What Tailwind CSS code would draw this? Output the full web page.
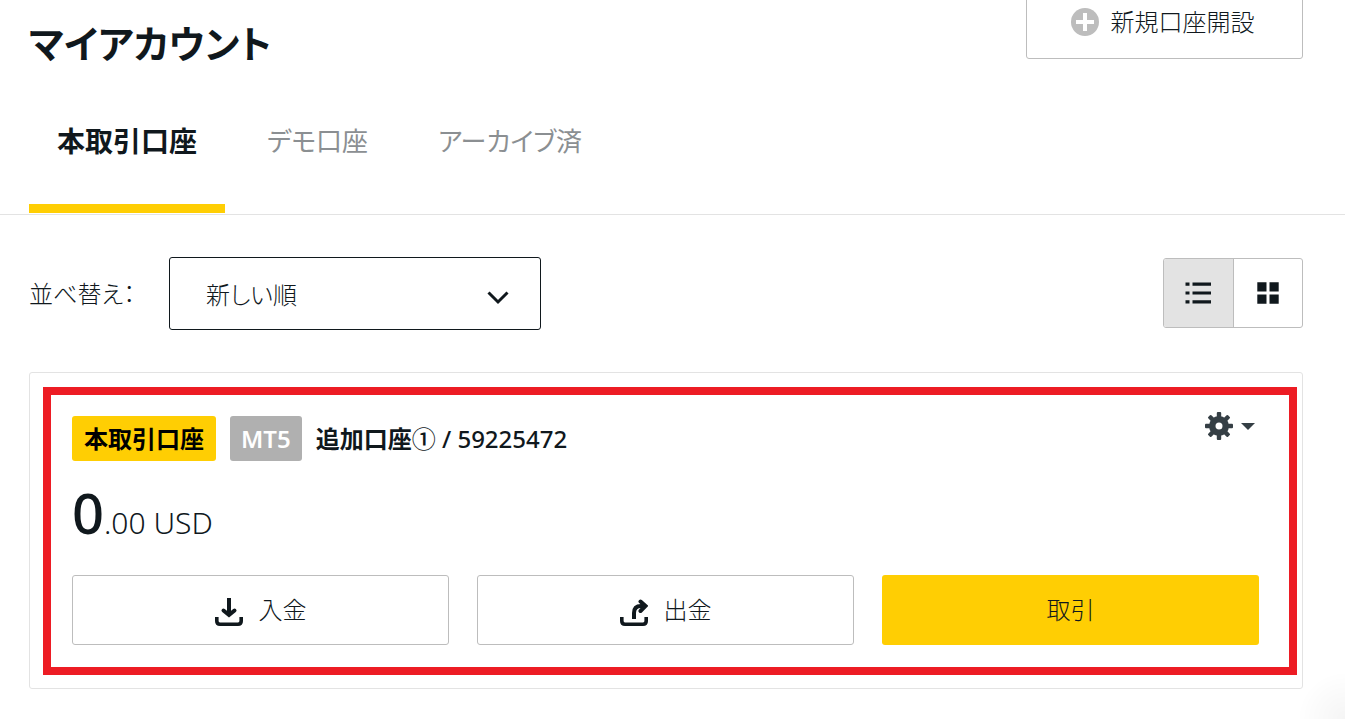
<!DOCTYPE html>
<html lang="ja">
<head>
<meta charset="utf-8">
<meta name="viewport" content="width=device-width, initial-scale=1">
<title>マイアカウント</title>
<script src="https://cdn.jsdelivr.net/npm/@tailwindcss/browser@4"></script>
</head>
<body class="bg-white font-['Noto_Sans','Noto_Sans_CJK_JP',sans-serif] text-2xl text-[#10181d] [font-feature-settings:'palt']">
<header class="flex items-start justify-between pr-[42px] pl-[29px]">
  <h1 class="mt-[19px] text-[38px] leading-[48px] font-bold">マイアカウント</h1>
  <button type="button" class="-mt-4 flex h-[75px] w-[277px] items-center justify-center gap-3 rounded-[3px] border border-[#bdbdbd] pr-1 font-light">
    <svg class="size-7" viewBox="0 0 28 28" aria-hidden="true"><circle cx="14" cy="14" r="14" fill="#bdbdbd"/><path d="M14 5v18M5 14h18" stroke="#fff" stroke-width="4"/></svg>
    <span class="leading-9">新規口座開設</span>
  </button>
</header>

<nav class="flex gap-[14px] border-b border-[#e3e3e3] pb-px pl-[29px] text-[26px] leading-10">
  <a href="#real" aria-current="page" class="border-b-[9px] border-[#ffce03] px-7 pt-[54px] pb-[43px] text-[28px] font-bold">本取引口座</a>
  <a href="#demo" class="px-7 pt-[54px] text-[#8b8f92]">デモ口座</a>
  <a href="#archive" class="px-7 pt-[54px] text-[#8b8f92]">アーカイブ済</a>
</nav>

<main class="pr-[42px] pl-[29px]">
  <div class="flex items-center pt-[42px]">
    <label for="sort" class="w-[140px] font-light">並べ替え：</label>
    <div class="relative w-[372px]">
      <select id="sort" class="h-[73px] w-full appearance-none rounded-[3px] border border-[#10181d] bg-white px-9 pt-0.5 font-light">
        <option>新しい順</option>
      </select>
      <svg class="pointer-events-none absolute top-[34px] right-8 h-[14px] w-[22px]" viewBox="0 0 22 14" fill="none" stroke="#10181d" stroke-width="3" aria-hidden="true"><path d="M1.500 1.500 11 11 20.500 1.500"/></svg>
    </div>
    <div class="mb-0.5 ml-auto flex h-[70px] w-[140px] overflow-hidden rounded-[3px] border border-[#bdbdbd]">
      <button type="button" aria-label="リスト表示" aria-pressed="true" class="flex flex-1 items-center justify-center border-r border-[#bdbdbd] bg-[#e3e3e3]">
        <svg class="h-[22px] w-[26px]" viewBox="0 0 26 22" fill="#10181d" aria-hidden="true"><path d="M.5.500h4v3.200h-4zM7.500.500H26v3.200H7.500zM.5 9.400h4v3.200h-4zM7.500 9.400H26v3.200H7.500zM.5 18.300h4v3.200h-4zM7.500 18.300H26v3.200H7.500z"/></svg>
      </button>
      <button type="button" aria-label="グリッド表示" aria-pressed="false" class="flex flex-1 items-center justify-center">
        <svg class="size-[22px]" viewBox="0 0 22 22" fill="#10181d" aria-hidden="true"><path d="M.3.300h9.200v9.200H.3zM12.500.300h9.200v9.200h-9.200zM.3 12.500h9.200v9.200H.3zM12.500 12.500h9.200v9.200h-9.200z"/></svg>
      </button>
    </div>
  </div>

  <section class="relative mt-[42px] rounded-[3px] border border-[#e3e3e3] pt-[43px] pr-[43px] pb-[43px] pl-[42px]">
    <div class="pointer-events-none absolute top-[14px] right-[5px] bottom-[13px] left-[13px] border-8 border-[#ed1c24]"></div>
    <div class="flex items-start">
      <span class="flex h-[45px] items-center rounded-[3px] bg-[#ffce03] px-3 font-bold text-black">本取引口座</span>
      <span class="ml-[14px] flex h-[45px] items-center rounded-[3px] bg-[#b0b0b0] px-[11px] font-semibold text-white">MT5</span>
      <h2 class="ml-[14px] flex h-[45px] items-center font-medium"><span class="font-bold">追加口座</span>①&nbsp;/ 59225472</h2>
      <button type="button" aria-label="口座の設定" class="-mt-1 mr-1 ml-auto flex items-center gap-2">
        <svg class="size-7" viewBox="0 0 28 28" fill="#353f45" aria-hidden="true">
          <path fill-rule="evenodd" d="M14 4a10 10 0 1 0 0 20 10 10 0 0 0 0-20Zm0 6.500a3.500 3.500 0 1 1 0 7 3.500 3.500 0 0 1 0-7Z"/>
          <g id="teeth"><rect x="11.800" width="4.400" height="6" rx="1"/><rect x="11.800" y="22" width="4.400" height="6" rx="1"/><rect y="11.800" width="6" height="4.400" rx="1"/><rect x="22" y="11.800" width="6" height="4.400" rx="1"/></g>
          <use href="#teeth" transform="rotate(45 14 14)"/>
        </svg>
        <svg class="h-[7px] w-[14px]" viewBox="0 0 14 7" fill="#353f45" aria-hidden="true"><path d="M0 0h14L7 7z"/></svg>
      </button>
    </div>
    <p class="mt-4 h-[70px] text-[30px] leading-[70px] font-light"><span class="text-[56px] font-medium">0</span>.00 USD</p>
    <div class="mt-7 grid grid-cols-3 gap-7 font-light">
      <button type="button" class="flex h-[70px] items-center justify-center gap-4 rounded-[3px] border border-[#bdbdbd]">
        <svg class="mt-1 size-7" viewBox="0 0 28 28" fill="none" stroke="#10181d" stroke-width="4" aria-hidden="true"><path d="M14 0v17" /><path d="M8.500 12.500 14 17l5.500-4.500" stroke-linecap="round"/><path stroke-width="3.600" d="M1.800 19v4q0 3.200 3.200 3.200h18q3.200 0 3.200-3.200v-4"/></svg>
        <span>入金</span>
      </button>
      <button type="button" class="flex h-[70px] items-center justify-center gap-4 rounded-[3px] border border-[#bdbdbd]">
        <svg class="mt-1 size-7" viewBox="0 0 28 28" fill="none" stroke="#10181d" stroke-width="4" aria-hidden="true"><path d="M14 21v-6q0-7 7-7h4"/><path d="m20.500 3.500 5 4.500-5 5" stroke-linecap="round"/><path stroke-width="3.600" d="M1.800 19v4q0 3.200 3.200 3.200h18q3.200 0 3.200-3.200v-4"/></svg>
        <span>出金</span>
      </button>
      <button type="button" class="h-[70px] rounded-[3px] bg-[#ffce03]">取引</button>
    </div>
  </section>
</main>
<div class="pointer-events-none fixed right-0 bottom-0 size-14 bg-radial-[at_100%_100%] from-black/4 to-transparent to-60%"></div>
</body>
</html>
